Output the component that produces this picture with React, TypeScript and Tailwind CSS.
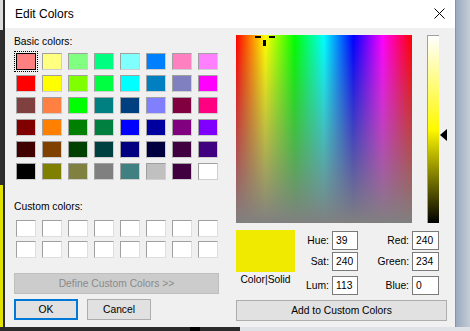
import React from 'react';

const basic = [
  ['#ff8080', '#ffff80', '#80ff80', '#00ff80', '#80ffff', '#0080ff', '#ff80c0', '#ff80ff'],
  ['#ff0000', '#ffff00', '#80ff00', '#00ff40', '#00ffff', '#0080c0', '#8080c0', '#ff00ff'],
  ['#804040', '#ff8040', '#00ff00', '#008080', '#004080', '#8080ff', '#800040', '#ff0080'],
  ['#800000', '#ff8000', '#008000', '#008040', '#0000ff', '#0000a0', '#800080', '#8000ff'],
  ['#400000', '#804000', '#004000', '#004040', '#000080', '#000040', '#400040', '#400080'],
  ['#000000', '#808000', '#808040', '#808080', '#408080', '#c0c0c0', '#400040', '#ffffff'],
];

function Field({ label, value, w, lw }: { label: string; value: string; w: string; lw: string }) {
  return (
    <div className="flex items-center h-[19px]">
      <span className={`${lw} text-right pr-[3px]`}>{label}</span>
      <div className={`${w} h-[19px] bg-white border border-[#7a7a7a] pl-[3px] leading-[17px]`}>{value}</div>
    </div>
  );
}

export default function App() {
  return (
    <div className="w-[470px] h-[331px] overflow-hidden flex flex-col bg-[#2b2b2b] text-black text-[10.3px] font-['Liberation_Sans',Arial,sans-serif]">
      <div className="flex h-[327px]">
        {/* background window on the left */}
        <div className="w-[5px] flex">
          <div className="w-[3px] flex flex-col">
            <div className="h-[30px] bg-[#dcdcdc]" />
            <div className="h-[155px] bg-[#2e2e2e]" />
            <div className="flex-1 bg-[#e2e200]" />
          </div>
          <div className="w-[2px] bg-[#2a2a2a]" />
        </div>

        {/* dialog */}
        <div className="w-[451px] flex flex-col border-r border-[#5e9ed6]">
          <div className="h-[28px] bg-white flex items-center justify-between pl-[10px] pr-[10px]">
            <span className="text-[12px] leading-none">Edit Colors</span>
            <svg width="11" height="11" viewBox="0 0 11 11" className="mt-[-2px]">
              <path d="M0.5 0.5 L10.5 10.5 M10.5 0.5 L0.5 10.5" stroke="#000" strokeWidth="1" />
            </svg>
          </div>

          <div className="flex-1 bg-[#f0f0f0] flex">
            {/* left column */}
            <div className="w-[225px] pl-[9px] pt-[8px] flex flex-col">
              <div className="leading-[12px] h-[12px]">Basic colors:</div>
              <div className="mt-[5px] ml-[2px] grid grid-cols-8 gap-x-[6px] gap-y-[5px] w-[202px]">
                {basic.flat().map((c, i) => (
                  <div
                    key={i}
                    className={
                      i === 0
                        ? 'w-[20px] h-[17px] border border-black outline-1 outline-dotted outline-black outline-offset-[1px]'
                        : 'w-[20px] h-[17px] border border-t-[#a0a0a0] border-l-[#a0a0a0] border-b-[#cfcfcf] border-r-[#cfcfcf]'
                    }
                    style={{ backgroundColor: c }}
                  />
                ))}
              </div>
              <div className="mt-[21px] leading-[12px] h-[12px]">Custom colors:</div>
              <div className="mt-[7px] ml-[2px] grid grid-cols-8 gap-x-[6px] gap-y-[4px] w-[202px]">
                {Array.from({ length: 16 }).map((_, i) => (
                  <div key={i} className="w-[20px] h-[17px] bg-white border border-t-[#a0a0a0] border-l-[#a0a0a0] border-b-[#dedede] border-r-[#dedede]" />
                ))}
              </div>
              <div className="mt-[15px] w-[205px] h-[21px] bg-[#cccccc] border border-[#bfbfbf] flex items-center justify-center text-[#8a8a8a]">
                Define Custom Colors &gt;&gt;
              </div>
              <div className="mt-[5px] flex gap-[9px]">
                <div className="w-[64px] h-[21px] bg-[#e1e1e1] border-2 border-[#0078d7] flex items-center justify-center">OK</div>
                <div className="w-[64px] h-[21px] bg-[#e1e1e1] border border-[#adadad] flex items-center justify-center">Cancel</div>
              </div>
            </div>

            {/* right column */}
            <div className="flex-1 pl-[6px] pt-[7px] flex flex-col">
              <div className="flex h-[188px]">
                <div className="relative w-[176px] h-[188px] bg-[linear-gradient(to_right,#ff0000,#ffff00,#00ff00,#00ffff,#0000ff,#ff00ff,#ff0000)]">
                  <div className="w-full h-full bg-[linear-gradient(to_bottom,rgba(128,128,128,0),#808080)]" />
                  <div className="absolute left-[19px] top-[1px] w-[6px] h-[2px] bg-black" />
                  <div className="absolute left-[33px] top-[1px] w-[6px] h-[2px] bg-black" />
                  <div className="absolute left-[27px] top-[5px] w-[3px] h-[6px] bg-black" />
                </div>
                <div className="ml-[15px] w-[12px] h-[188px] border-t border-l border-[#a0a0a0] bg-[linear-gradient(to_bottom,#ffffff,#fff900_50%,#000000)]" />
                <svg width="7" height="12" viewBox="0 0 7 12" className="ml-[1px] mt-[94px]">
                  <path d="M7 0 L0 6 L7 12 Z" fill="#000" />
                </svg>
              </div>

              <div className="mt-[7px] flex">
                <div className="w-[59px] flex flex-col items-center">
                  <div className="w-[59px] h-[42px] bg-[#f0ea00]" />
                  <div className="mt-[2px] leading-[12px]">Color|Solid</div>
                </div>
                <div className="flex flex-col pt-[1px]">
                  <Field label="Hue:" value="39" w="w-[26px]" lw="w-[37px]" />
                  <div className="mt-[2px]"><Field label="Sat:" value="240" w="w-[26px]" lw="w-[37px]" /></div>
                  <div className="mt-[5px]"><Field label="Lum:" value="113" w="w-[26px]" lw="w-[37px]" /></div>
                </div>
                <div className="flex flex-col pt-[1px]">
                  <Field label="Red:" value="240" w="w-[27px]" lw="w-[54px]" />
                  <div className="mt-[2px]"><Field label="Green:" value="234" w="w-[27px]" lw="w-[54px]" /></div>
                  <div className="mt-[5px]"><Field label="Blue:" value="0" w="w-[27px]" lw="w-[54px]" /></div>
                </div>
              </div>

              <div className="mt-[5px] w-[211px] h-[21px] bg-[#e1e1e1] border border-[#adadad] flex items-center justify-center">
                Add to Custom Colors
              </div>
            </div>
          </div>
        </div>

        {/* background on the right */}
        <div className="flex-1 bg-[linear-gradient(to_right,#9aaac0,#c5ccd6)]" />
      </div>
      <div className="flex h-[4px]">
        <div className="w-[190px] bg-[#2b2b2b]" />
        <div className="w-[10px] bg-black" />
        <div className="w-[40px] bg-[#2b2b2b]" />
        <div className="flex-1 bg-[#dfe2e6]" />
      </div>
    </div>
  );
}
